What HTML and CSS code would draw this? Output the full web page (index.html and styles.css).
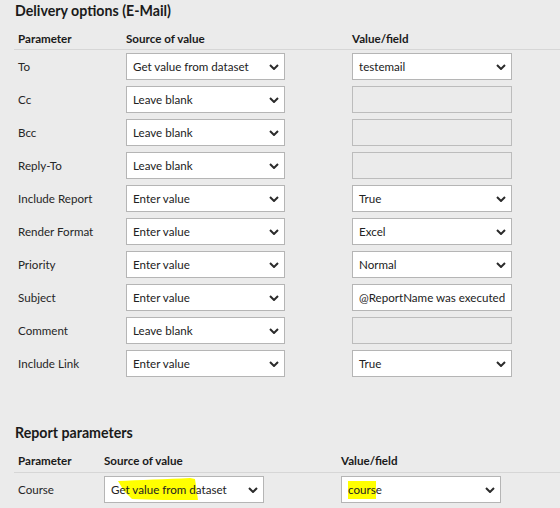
FILE: index.html
```html
<!DOCTYPE html>
<html>
<head>
<meta charset="utf-8">
<link rel="stylesheet" href="styles.css">
</head>
<body>
<section class="sec sec1">
  <h2 class="title">Delivery options (E-Mail)</h2>
  <div class="head">
    <div class="c1">Parameter</div><div class="c2">Source of value</div><div class="c3">Value/field</div>
  </div>
  <div class="rows">
    <div class="row"><div class="c1">To</div><div class="c2 box sel">Get value from dataset<svg class="chev" viewBox="0 0 10 6"><path d="M1 1 L5 5 L9 1"/></svg></div><div class="c3 box sel">testemail<svg class="chev" viewBox="0 0 10 6"><path d="M1 1 L5 5 L9 1"/></svg></div></div>
    <div class="row"><div class="c1">Cc</div><div class="c2 box sel">Leave blank<svg class="chev" viewBox="0 0 10 6"><path d="M1 1 L5 5 L9 1"/></svg></div><div class="c3 box dis"></div></div>
    <div class="row"><div class="c1">Bcc</div><div class="c2 box sel">Leave blank<svg class="chev" viewBox="0 0 10 6"><path d="M1 1 L5 5 L9 1"/></svg></div><div class="c3 box dis"></div></div>
    <div class="row"><div class="c1">Reply-To</div><div class="c2 box sel">Leave blank<svg class="chev" viewBox="0 0 10 6"><path d="M1 1 L5 5 L9 1"/></svg></div><div class="c3 box dis"></div></div>
    <div class="row"><div class="c1">Include Report</div><div class="c2 box sel">Enter value<svg class="chev" viewBox="0 0 10 6"><path d="M1 1 L5 5 L9 1"/></svg></div><div class="c3 box sel">True<svg class="chev" viewBox="0 0 10 6"><path d="M1 1 L5 5 L9 1"/></svg></div></div>
    <div class="row"><div class="c1">Render Format</div><div class="c2 box sel">Enter value<svg class="chev" viewBox="0 0 10 6"><path d="M1 1 L5 5 L9 1"/></svg></div><div class="c3 box sel">Excel<svg class="chev" viewBox="0 0 10 6"><path d="M1 1 L5 5 L9 1"/></svg></div></div>
    <div class="row"><div class="c1">Priority</div><div class="c2 box sel">Enter value<svg class="chev" viewBox="0 0 10 6"><path d="M1 1 L5 5 L9 1"/></svg></div><div class="c3 box sel">Normal<svg class="chev" viewBox="0 0 10 6"><path d="M1 1 L5 5 L9 1"/></svg></div></div>
    <div class="row"><div class="c1">Subject</div><div class="c2 box sel">Enter value<svg class="chev" viewBox="0 0 10 6"><path d="M1 1 L5 5 L9 1"/></svg></div><div class="c3 box txt"><span class="clip">@ReportName was executed at @ExecutionTime</span></div></div>
    <div class="row"><div class="c1">Comment</div><div class="c2 box sel">Leave blank<svg class="chev" viewBox="0 0 10 6"><path d="M1 1 L5 5 L9 1"/></svg></div><div class="c3 box dis"></div></div>
    <div class="row"><div class="c1">Include Link</div><div class="c2 box sel">Enter value<svg class="chev" viewBox="0 0 10 6"><path d="M1 1 L5 5 L9 1"/></svg></div><div class="c3 box sel">True<svg class="chev" viewBox="0 0 10 6"><path d="M1 1 L5 5 L9 1"/></svg></div></div>
  </div>
</section>

<section class="sec sec2">
  <h2 class="title">Report parameters</h2>
  <div class="head">
    <div class="c1">Parameter</div><div class="c2">Source of value</div><div class="c3">Value/field</div>
  </div>
  <div class="rows">
    <div class="row">
      <div class="c1">Course</div>
      <div class="c2 box sel">
        <svg class="hl" width="84" height="23" viewBox="0 0 84 23"><path d="M0 3 C20 2 50 1 72 0 L77 1 L80 22 C60 22 30 22 14 21 L6 13 Z" fill="#ffff00"/></svg>
        <span class="t">Get value from dataset</span><svg class="chev" viewBox="0 0 10 6"><path d="M1 1 L5 5 L9 1"/></svg>
      </div>
      <div class="c3 box sel"><span class="mark">cours</span>e<svg class="chev" viewBox="0 0 10 6"><path d="M1 1 L5 5 L9 1"/></svg></div>
    </div>
  </div>
</section>
</body>
</html>
```

FILE: styles.css
```css
html, body {
  margin: 0;
  padding: 0;
  background: #ebebeb;
}
body {
  font-family: Lato, "Liberation Sans", sans-serif;
  font-size: 11.6px;
  color: #262626;
  width: 560px;
  height: 508px;
  overflow: hidden;
}
.title {
  margin: 0;
  padding: 1px 0 0 15px;
  font-size: 14.2px;
  font-weight: bold;
  color: #1a1a1a;
  line-height: 20px;
}
.sec2 {
  margin-top: 45px;
}
.head {
  display: flex;
  margin: 9px 0 0 14px;
  height: 17px;
  line-height: 17px;
  padding-bottom: 2px;
  border-bottom: 1px solid #d6d6d6;
  font-weight: bold;
  color: #1a1a1a;
}
.sec2 .head {
  padding-bottom: 3px;
}
.rows {
  display: flex;
  flex-direction: column;
  gap: 6px;
  margin: 3px 0 0 14px;
}
.row {
  display: flex;
  align-items: center;
  height: 27px;
}
.c1 {
  box-sizing: border-box;
  width: 112px;
  padding-left: 4px;
  flex: none;
}
.c2 {
  box-sizing: border-box;
  width: 159px;
  flex: none;
}
.c3 {
  box-sizing: border-box;
  width: 160px;
  margin-left: 67px;
  flex: none;
}
.sec2 .c1 { width: 90px; }
.sec2 .c2 { width: 160px; }
.sec2 .c3 { margin-left: 77px; }
.box {
  position: relative;
  height: 27px;
  border: 1px solid #b5b5b5;
  background: #fff;
  padding: 0 22px 0 6px;
  line-height: 25px;
  white-space: nowrap;
  overflow: hidden;
  color: #222;
}
.box.dis {
  background: #ebebeb;
  border-color: #bcbcbc;
}
.box.txt {
  padding-right: 6px;
}
.clip {
  display: block;
  overflow: hidden;
  white-space: nowrap;
}
.chev {
  position: absolute;
  right: 5px;
  top: 10px;
  width: 10px;
  height: 6px;
  fill: none;
  stroke: #2b2b2b;
  stroke-width: 2;
}
.t {
  position: relative;
}
.hl {
  position: absolute;
  left: 13px;
  top: 1px;
}
.mark {
  background: #ffff00;
  padding: 2px 0 3px;
}
```
